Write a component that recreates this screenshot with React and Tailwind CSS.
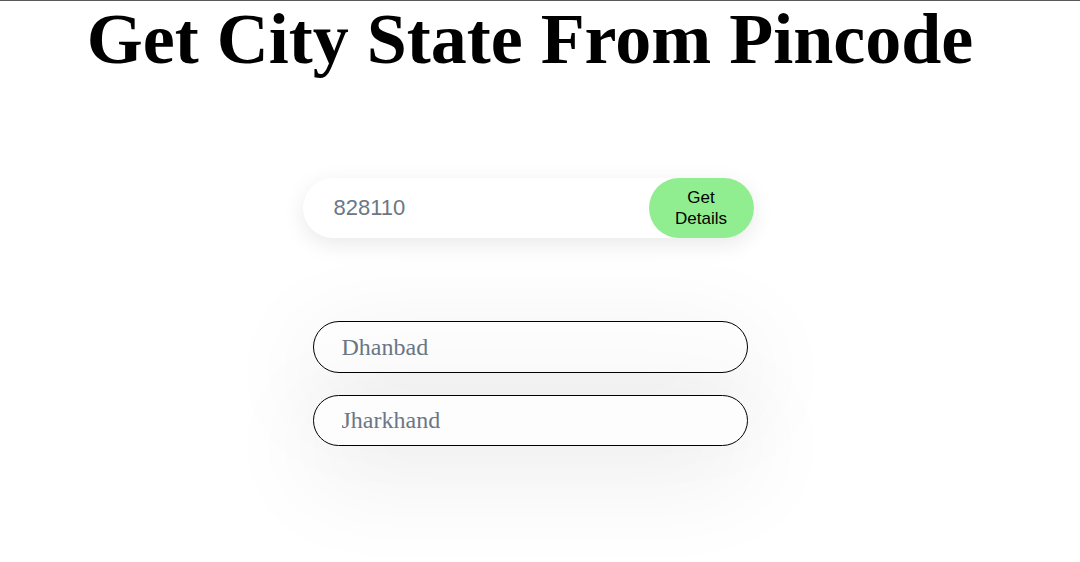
import React, { useState } from 'react';

const App = () => {
  const [pincode, setPincode] = useState('828110');
  const [city, setCity] = useState('Dhanbad');
  const [state, setState] = useState('Jharkhand');

  return (
    <div className="min-h-[562px] w-full border-t border-[#5a5a5a] bg-white pr-[20px]">
      <h1 className="text-center font-['Liberation_Serif',serif] text-[72px] font-bold leading-[76px] text-black">
        Get City State From Pincode
      </h1>

      <div className="mt-[101px] flex justify-center">
        <div className="mr-[4px] flex h-[60px] w-[451px] items-center rounded-full bg-white shadow-[0_6px_22px_rgba(0,0,0,0.09)]">
          <input
            value={pincode}
            onChange={(e) => setPincode(e.target.value)}
            className="h-full min-w-0 flex-1 rounded-full bg-transparent pl-[31px] font-['Liberation_Sans',Arial,sans-serif] text-[22px] text-[#6b7785] outline-none"
          />
          <button className="h-[60px] w-[105px] shrink-0 rounded-full bg-[#90ee90] px-[20px] font-['Liberation_Sans',Arial,sans-serif] text-[17px] leading-[21px] text-black">
            Get Details
          </button>
        </div>
      </div>

      <div className="mt-[83px] flex flex-col items-center gap-[22px]">
        <input
          value={city}
          onChange={(e) => setCity(e.target.value)}
          className="h-[52px] w-[435px] rounded-full border border-black bg-[#fdfdfd] pl-[28px] font-['Liberation_Serif',serif] text-[24px] text-[#6b7785] shadow-[0_25px_100px_10px_rgba(0,0,0,0.07)] outline-none"
        />
        <input
          value={state}
          onChange={(e) => setState(e.target.value)}
          className="h-[51px] w-[435px] rounded-full border border-black bg-[#fdfdfd] pl-[28px] font-['Liberation_Serif',serif] text-[24px] text-[#6b7785] shadow-[0_25px_100px_10px_rgba(0,0,0,0.07)] outline-none"
        />
      </div>
    </div>
  );
};

export default App;
